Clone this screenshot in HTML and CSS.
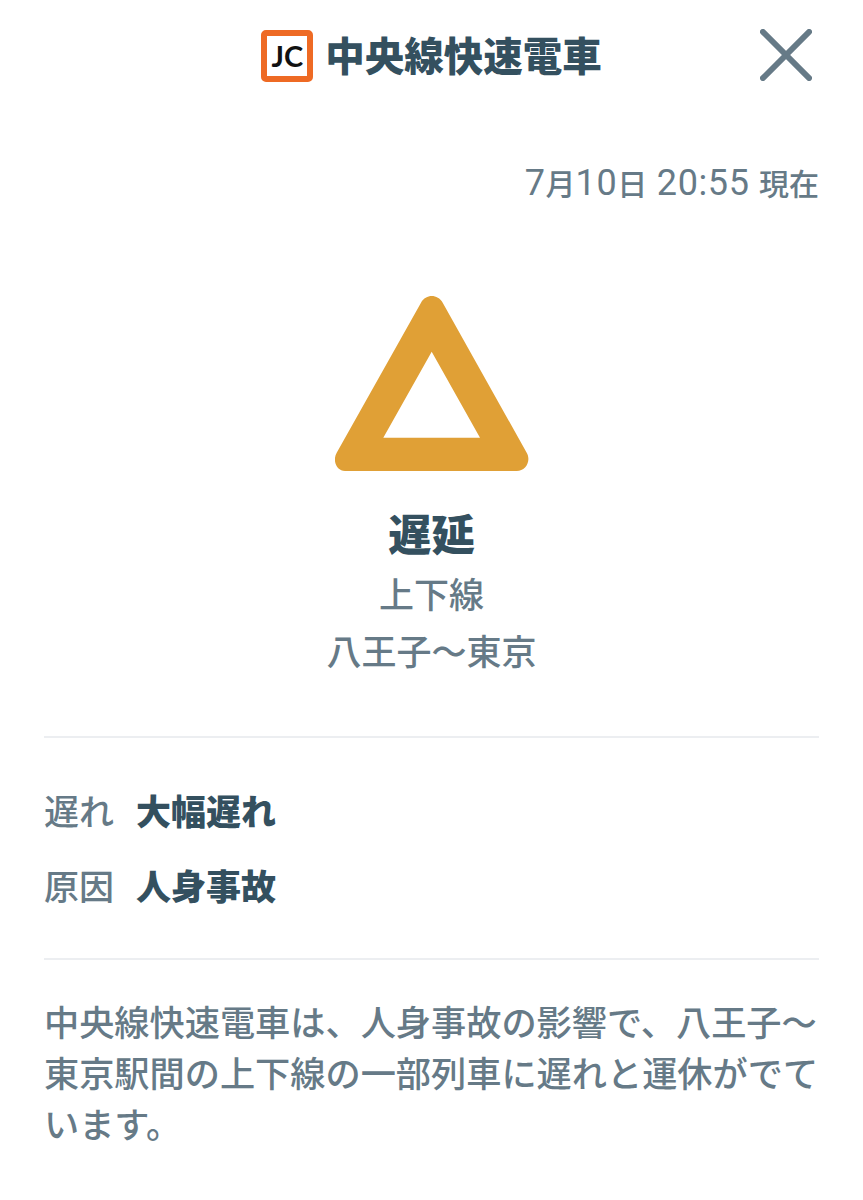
FILE: index.html
```html
<!DOCTYPE html>
<html lang="ja">
<head>
  <meta charset="UTF-8" />
  <meta name="viewport" content="width=device-width, initial-scale=1.0" />
  <title>中央線快速電車</title>
  <link rel="stylesheet" href="styles.css">
</head>
<body>
  <div class="container">
    <header class="header">
      <div class="line-title">
        <span class="line-badge">JC</span>
        <h1>中央線快速電車</h1>
      </div>
      <svg class="close" viewBox="0 0 54 54" aria-label="閉じる">
        <path d="M3 3 L51 51 M51 3 L3 51" />
      </svg>
    </header>

    <p class="updated"><span class="num">7</span>月<span class="num">10</span>日<span class="num"> 20:55 </span>現在</p>

    <section class="status">
      <svg class="status-icon" viewBox="0 0 194 176">
        <path fill-rule="evenodd" d="M86 6.7 C91 -2.2 102.5 -2.2 107.7 6.7 L191.7 156.7 C196.5 165 190.5 175 181.7 175 L10 175 C2 175 -3 165 1.7 156.7 Z M96.7 55.7 L48.3 141.7 L145 141.7 Z" />
      </svg>
      <h2>遅延</h2>
      <p>上下線</p>
      <p>八王子〜東京</p>
    </section>

    <dl class="details">
      <div class="detail-row">
        <dt>遅れ</dt>
        <dd>大幅遅れ</dd>
      </div>
      <div class="detail-row">
        <dt>原因</dt>
        <dd>人身事故</dd>
      </div>
    </dl>

    <p class="message">中央線快速電車は、人身事故の影響で、八王子〜東京駅間の上下線の一部列車に遅れと運休がでています。</p>
  </div>
</body>
</html>
```

FILE: styles.css
```css
body {
  font-family: "Noto Sans CJK JP", "Noto Sans", sans-serif;
  font-weight: 500;
  background: #fff;
  color: #667a87;
  margin: 0;
  padding: 0;
}

.container {
  padding: 0 44px;
}

.header {
  position: relative;
  display: flex;
  justify-content: center;
  padding-top: 29px;
  height: 53px;
}

.line-title {
  display: flex;
  align-items: center;
  gap: 12px;
}

.line-badge {
  box-sizing: border-box;
  width: 52px;
  height: 52px;
  border: 6px solid #ee6a24;
  border-radius: 5px;
  display: flex;
  align-items: center;
  justify-content: center;
  font-family: Lato, sans-serif;
  font-size: 29px;
  font-weight: 700;
  color: #111;
}

h1 {
  margin: -5px 0 0;
  font-size: 39.5px;
  line-height: 53px;
  font-weight: 900;
  color: #34505f;
}

.close {
  position: absolute;
  top: 29px;
  right: 7px;
  width: 52px;
  height: 52px;
}

.close path {
  fill: none;
  stroke: #667a87;
  stroke-width: 6;
  stroke-linecap: round;
}

.updated {
  margin: 78px 0 0;
  font-size: 30px;
  line-height: 44px;
  text-align: right;
  white-space: pre;
}

.updated .num {
  font-family: Roboto, sans-serif;
  font-size: 36px;
  font-weight: 400;
  letter-spacing: 0.6px;
}

.status {
  margin-top: 91px;
  padding-bottom: 58px;
  border-bottom: 2px solid #eceef1;
  text-align: center;
}

.status-icon {
  display: block;
  width: 194px;
  height: 176px;
  margin: 0 auto;
  fill: #e0a036;
}

.status h2 {
  margin: 32px 0 3px;
  font-size: 43.5px;
  line-height: 58px;
  font-weight: 900;
  color: #34505f;
}

.status p {
  margin: 0;
  font-size: 35px;
  line-height: 56.5px;
}

.details {
  margin: 0;
  padding: 34px 0 36px;
  border-bottom: 2px solid #eceef1;
}

.detail-row {
  display: flex;
  gap: 22px;
  font-size: 35px;
  line-height: 75px;
}

.detail-row dd {
  margin: 0;
  font-weight: 900;
  color: #34505f;
}

.message {
  margin: 35px 0 0;
  font-size: 35.2px;
  line-height: 51px;
}
```
